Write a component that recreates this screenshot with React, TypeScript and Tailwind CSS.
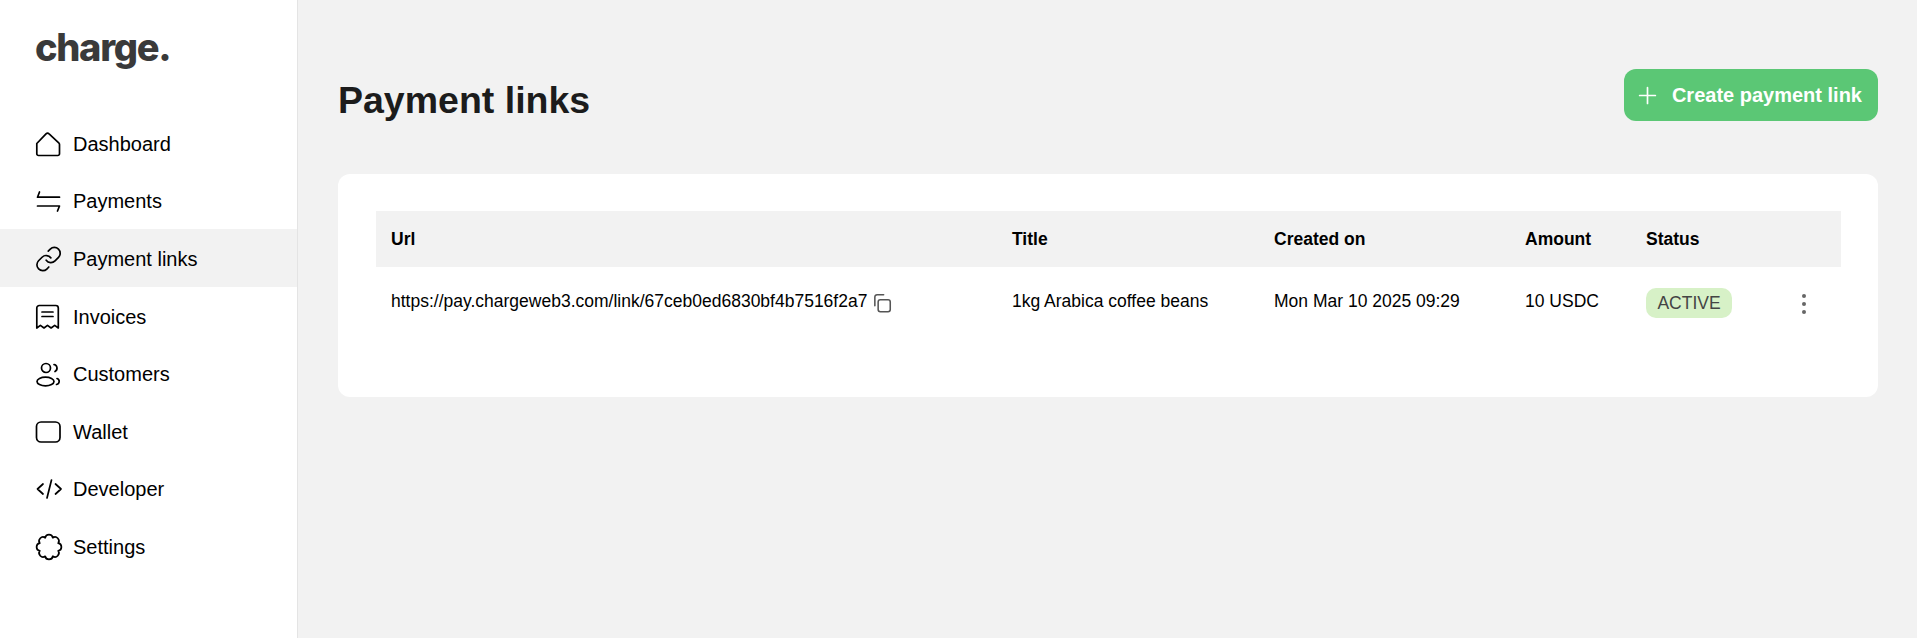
import { Link, Plus } from "lucide-react";
import type { ReactNode } from "react";

const Icon = ({ children }: { children: ReactNode }) => (
  <svg
    viewBox="0 0 28 28"
    fill="none"
    stroke="currentColor"
    strokeWidth="1.7"
    strokeLinecap="round"
    strokeLinejoin="round"
    className="h-7 w-7 shrink-0"
  >
    {children}
  </svg>
);

const navItems: { label: string; active?: boolean; icon: ReactNode }[] = [
  {
    label: "Dashboard",
    icon: (
      <Icon>
        <path d="M1.800 13.500 11 3.800a2.200 2.200 0 0 1 3.100 0l9.900 9.400a2 2 0 0 1 .5 1.300v9.300a1.700 1.700 0 0 1-1.700 1.700H3.500a1.700 1.700 0 0 1-1.700-1.700z" />
      </Icon>
    ),
  },
  {
    label: "Payments",
    icon: (
      <Icon>
        <path d="M4.500 5 2.500 10.200h22" />
        <path d="M2.500 19h22L22.500 24" />
      </Icon>
    ),
  },
  {
    label: "Payment links",
    active: true,
    icon: (
      <Icon>
        <g transform="translate(-.5 0) scale(1.17)">
          <Link size={24} strokeWidth={1.45} />
        </g>
      </Icon>
    ),
  },
  {
    label: "Invoices",
    icon: (
      <Icon>
        <path d="M1.800 25V5a2.500 2.500 0 0 1 2.500-2.500h16.500a2.500 2.500 0 0 1 2.500 2.500v20l-3.600-2.600-3.600 2.600-3.600-2.600-3.500 2.600-3.600-2.600z" />
        <path d="M7 9h11M7 13.500h11" />
      </Icon>
    ),
  },
  {
    label: "Customers",
    icon: (
      <Icon>
        <circle cx="11" cy="8" r="4.500" />
        <ellipse cx="10.500" cy="21.500" rx="8.500" ry="4.300" />
        <path d="M19 4.500c3 .3 4.500 5 1 7M22 18.500c3 1 3 5-.5 6" />
      </Icon>
    ),
  },
  {
    label: "Wallet",
    icon: (
      <Icon>
        <rect x="1.500" y="4" width="23.500" height="20" rx="4.500" />
      </Icon>
    ),
  },
  {
    label: "Developer",
    icon: (
      <Icon>
        <path d="M8 9 2.500 14 8 19M20.500 9l5.500 5-5.500 5M16.500 5l-4.500 18" />
      </Icon>
    ),
  },
  {
    label: "Settings",
    icon: (
      <Icon>
        <path d="M10.170 4.760A3.900 3.900 0 0 1 17.830 4.760 3.900 3.900 0 0 1 23.240 10.170 3.900 3.900 0 0 1 23.240 17.830 3.900 3.900 0 0 1 17.830 23.240 3.900 3.900 0 0 1 10.170 23.240 3.900 3.900 0 0 1 4.760 17.830 3.900 3.900 0 0 1 4.760 10.170 3.900 3.900 0 0 1 10.170 4.760z" />
      </Icon>
    ),
  },
];

const columns = "grid grid-cols-[621px_262px_251px_121px_1fr]";

export default function App() {
  return (
    <div className="flex h-screen bg-[#f2f2f2] font-['Liberation_Sans',sans-serif] text-black">
      <aside className="w-[298px] shrink-0 border-r border-[#e4e4e4] bg-white">
        <div className="h-[114px] pl-[35px] pt-5 font-['Inter',sans-serif] text-[38px] leading-[54px] font-extrabold tracking-[-0.035em] text-[#3a3a3a]">
          charge.
        </div>
        <nav>
          {navItems.map((item) => (
            <div
              key={item.label}
              className={`flex h-[57.6px] items-center gap-2.5 pl-[35px] pt-0.5 text-[20px] ${
                item.active ? "bg-[#f2f2f2]" : ""
              }`}
            >
              {item.icon}
              {item.label}
            </div>
          ))}
        </nav>
      </aside>

      <main className="min-w-0 flex-1 pl-10 pr-[39px] pt-[69px]">
        <div className="flex items-start justify-between">
          <h1 className="pt-[11px] text-[37.5px] leading-[41px] font-bold text-[#1c1c1c]">
            Payment links
          </h1>
          <button className="flex h-[52px] items-center gap-[11px] rounded-xl bg-[#5bc775] pl-[10px] pr-4 text-[20px] font-bold text-white">
            <Plus size={27} strokeWidth={1.5} />
            Create payment link
          </button>
        </div>

        <section className="mt-[53px] h-[223px] rounded-xl bg-white pl-[38px] pr-[37px] pt-[37px]">
          <div className={`${columns} h-14 items-center bg-[#f2f2f2] text-[17.5px] font-bold`}>
            <div className="pl-[15px]">Url</div>
            <div className="pl-[15px]">Title</div>
            <div className="pl-[15px]">Created on</div>
            <div className="pl-[15px]">Amount</div>
            <div className="pl-[15px]">Status</div>
          </div>
          <div className={`${columns} pt-[21px] text-[17.5px]`}>
            <div className="flex items-start pl-[15px]">
              https://pay.chargeweb3.com/link/67ceb0ed6830bf4b7516f2a7
              <svg
                viewBox="0 0 20 20"
                fill="none"
                stroke="#555"
                strokeWidth="1.4"
                strokeLinecap="round"
                className="ml-1 mt-1 h-[22px] w-[22px]"
              >
                <rect x="6.500" y="7" width="11" height="11" rx="2" />
                <path d="M3.500 12.500V4.500a2 2 0 0 1 2-2h6" />
              </svg>
            </div>
            <div className="pl-[15px]">1kg Arabica coffee beans</div>
            <div className="pl-[15px]">Mon Mar 10 2025 09:29</div>
            <div className="pl-[15px]">10 USDC</div>
            <div className="flex items-start justify-between pl-[15px] pr-[35px]">
              <span className="flex h-[30px] w-[86px] items-center justify-center rounded-[10px] bg-[#d7f1c7] text-[#444]">
                ACTIVE
              </span>
              <span className="mt-[6px] flex flex-col gap-[4px]">
                <span className="h-[4px] w-[4px] rounded-full bg-[#666]" />
                <span className="h-[4px] w-[4px] rounded-full bg-[#666]" />
                <span className="h-[4px] w-[4px] rounded-full bg-[#666]" />
              </span>
            </div>
          </div>
        </section>
      </main>
    </div>
  );
}
